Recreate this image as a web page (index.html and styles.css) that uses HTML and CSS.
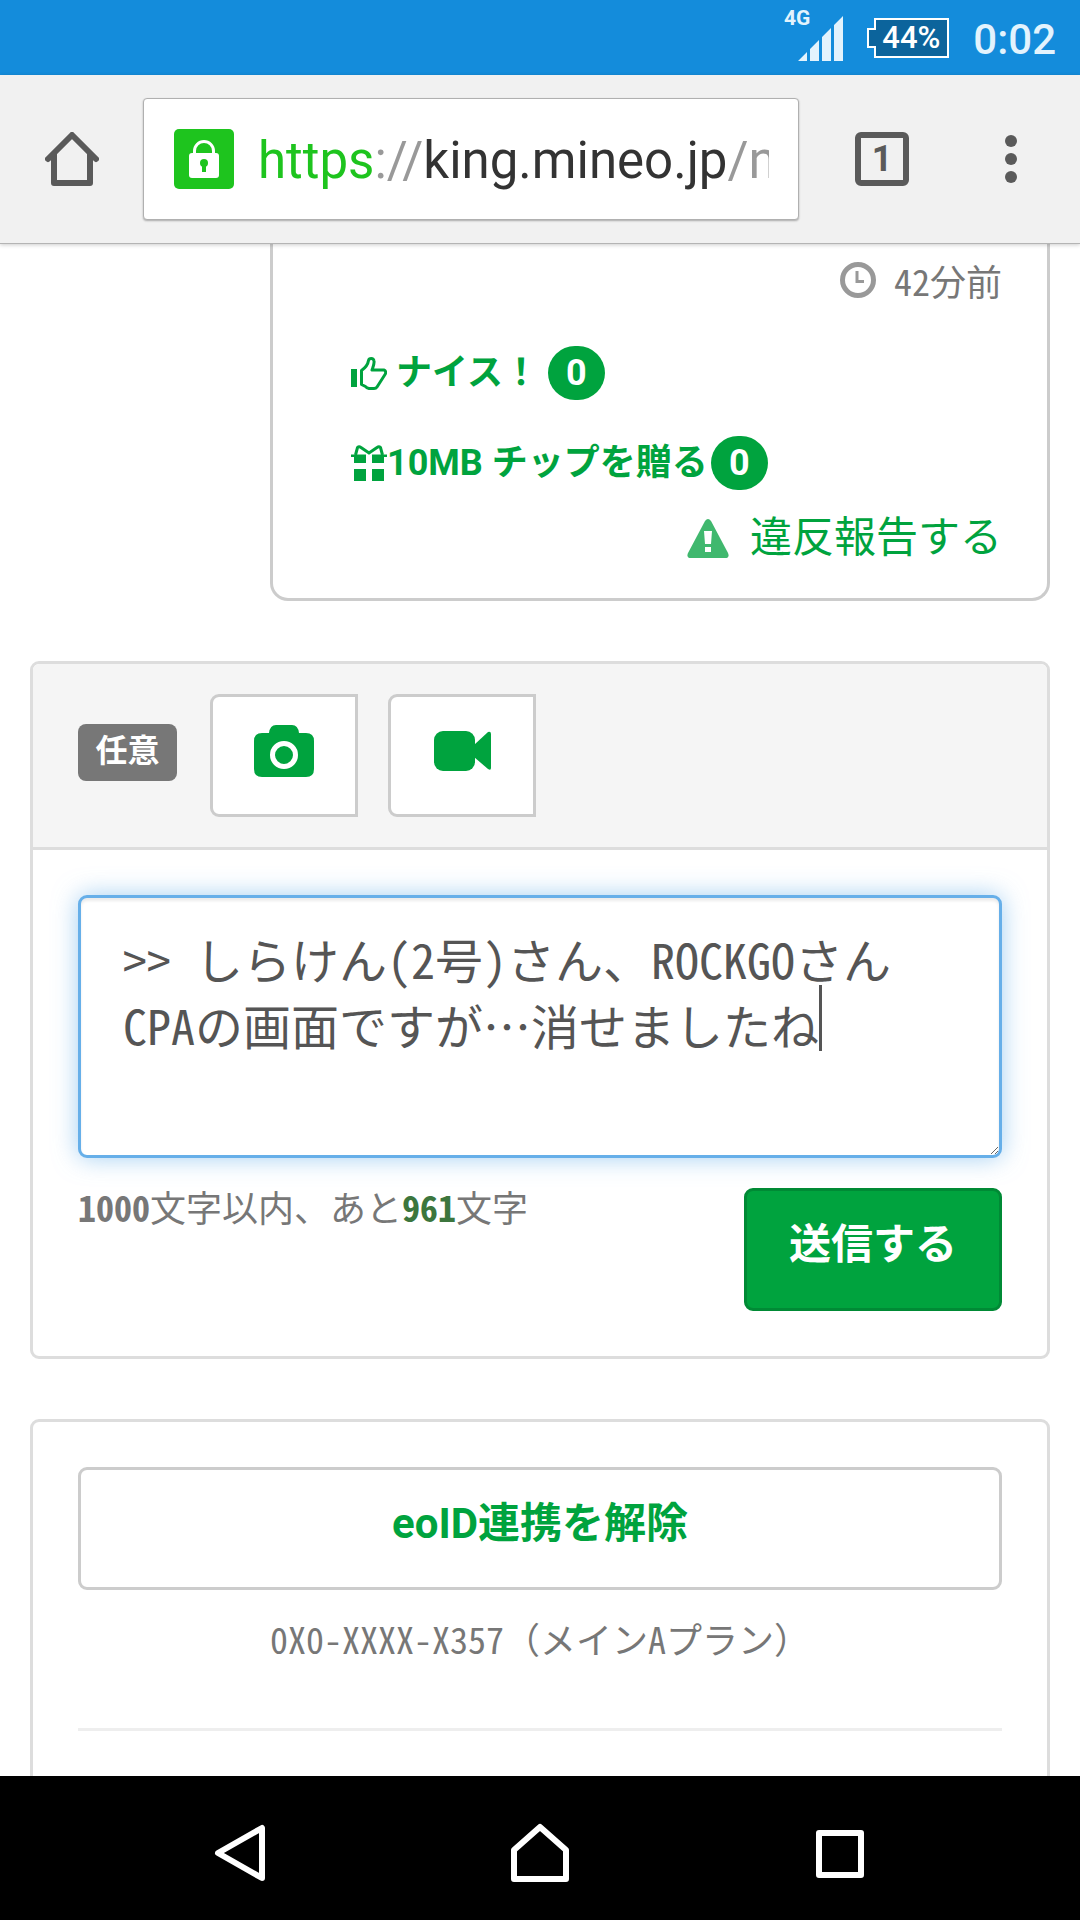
FILE: index.html
```html
<!DOCTYPE html>
<html lang="ja">
<head>
<meta charset="utf-8">
<meta name="viewport" content="width=device-width">
<title>king.mineo.jp</title>
<link rel="stylesheet" href="styles.css">
</head>
<body>
<div class="status-bar">
  <div class="signal">
    <span class="network">4G</span>
    <svg width="45" height="45" viewBox="0 0 45 45" fill="currentColor" aria-hidden="true"><path d="M0 45L9 36V45ZM12 33L21 24V45H12ZM24 21L33 12V45H24ZM36 9L45 0V45H36Z"/></svg>
  </div>
  <div class="battery">
    <svg class="battery-shape" width="82" height="40" viewBox="0 0 82 40" aria-hidden="true"><path d="M8 1H81V39H8V29H1V11H8Z" fill="#0c649c" stroke="#fff" stroke-width="2"/></svg>
    <span class="battery-level">44%</span>
  </div>
  <span class="clock">0:02</span>
</div>

<header class="toolbar">
  <button class="tool" type="button" aria-label="ホーム">
    <svg width="54" height="54" viewBox="0 0 54 54" fill="none" stroke="#5a5a5a" stroke-width="6" stroke-linecap="round" stroke-linejoin="round" aria-hidden="true"><path d="M3 27L27 3L51 27M9 22V51H45V22"/></svg>
  </button>
  <div class="address">
    <svg class="lock" width="60" height="60" viewBox="0 0 60 60" aria-hidden="true"><rect width="60" height="60" rx="5" fill="#1ec41e"/><path d="M20.500 26V22a9.500 9.500 0 0 1 19 0V26" fill="none" stroke="#fff" stroke-width="3"/><rect x="15" y="24" width="30" height="25" rx="3" fill="#fff"/><circle cx="30" cy="34" r="4" fill="#1ec41e"/><rect x="28" y="36" width="4" height="7" fill="#1ec41e"/></svg>
    <div class="url"><span class="scheme">https</span><span class="faint">://</span>king.mineo.jp<span class="faint">/n</span></div>
  </div>
  <button class="tool tabs" type="button" aria-label="タブ">1</button>
  <button class="tool" type="button" aria-label="メニュー">
    <svg width="12" height="48" viewBox="0 0 12 48" fill="#5a5a5a" aria-hidden="true"><circle cx="6" cy="6" r="6"/><circle cx="6" cy="24" r="6"/><circle cx="6" cy="42" r="6"/></svg>
  </button>
</header>

<main class="page">
  <article class="comment">
    <div class="time">
      <svg width="36" height="36" viewBox="0 0 36 36" fill="none" stroke="#999" aria-hidden="true"><circle cx="18" cy="18" r="15.500" stroke-width="5"/><path d="M17 9V19.500H24" stroke-width="3"/></svg>
      <span class="half">42分前</span>
    </div>
    <a class="action nice" href="#">
      <svg width="36" height="33" viewBox="0 0 36 33" aria-hidden="true"><path d="M0 12H6V30H0Z" fill="currentColor"/><path d="M10.500 13.500C14 11 17 7 17.500 3.500C18 1 22.500 .500 23 4C23.500 7 22 10 21 13H33C35 13.500 35 16 34 17.500L26 30Q25 31.500 23 31.500H18Q15.500 31 14.500 29.500L10.500 27.500Z" fill="none" stroke="currentColor" stroke-width="3" stroke-linejoin="round"/></svg>
      <span>ナイス！</span><span class="badge">0</span>
    </a>
    <a class="action tip" href="#">
      <svg width="36" height="36" viewBox="0 0 36 36" aria-hidden="true"><path d="M0 9.500H36V12H33V18H21V9.500H15V18H3V12H0ZM3 24H15V36H3ZM21 24H33V36H21Z" fill="currentColor"/><path d="M4.500 10L6.500 2.500Q8 1 10 2.500L18 8L26 2.500Q28 1 29.500 2.500L31.500 10" fill="none" stroke="currentColor" stroke-width="3"/></svg>
      <span>10MB チップを贈る</span><span class="badge">0</span>
    </a>
    <a class="report" href="#">
      <svg width="42" height="39" viewBox="0 0 42 39" aria-hidden="true"><path d="M18 2Q21 -2 24 2L41 34Q43 39 38 39H4Q-1 39 1 34Z" fill="#40b86e"/><path d="M17 12H25L24 25H18ZM18 28H24V33H18Z" fill="#fff"/></svg>
      <span>違反報告する</span>
    </a>
  </article>

  <form class="card" action="#" onsubmit="return false">
    <div class="attach">
      <span class="optional">任意</span>
      <button class="attach-button" type="button" aria-label="写真">
        <svg width="60" height="52" viewBox="0 0 60 52" aria-hidden="true"><path d="M15 8Q16 0 22 0H38Q44 0 45 8H52Q60 8 60 16V44Q60 52 52 52H8Q0 52 0 44V16Q0 8 8 8Z" fill="#00a33e"/><circle cx="30" cy="30" r="11.500" fill="none" stroke="#fff" stroke-width="5"/></svg>
      </button>
      <button class="attach-button" type="button" aria-label="動画">
        <svg width="57" height="40" viewBox="0 0 57 40" fill="#00a33e" aria-hidden="true"><rect width="41" height="40" rx="9"/><path d="M40 14L54 1Q57 0 57 3V37Q57 40 54 38L40 26Z"/></svg>
      </button>
    </div>
    <div class="compose">
      <div class="editor">
        <textarea class="message half" aria-label="コメント">&gt;&gt; しらけん(2号)さん、ROCKGOさん
CPAの画面ですが…消せましたね</textarea>
        <span class="caret"></span>
      </div>
      <div class="submit-row">
        <p class="counter half"><b>1000</b>文字以内、あと<b class="remaining">961</b>文字</p>
        <button class="submit" type="submit">送信する</button>
      </div>
    </div>
  </form>

  <section class="card account">
    <button class="unlink" type="button">eoID連携を解除</button>
    <p class="plan half">0X0-XXXX-X357<span class="full">（</span>メインAプラン<span class="full">）</span></p>
    <hr class="divider">
  </section>
</main>

<nav class="nav-bar">
  <button class="nav-button" type="button" aria-label="戻る"><svg width="60" height="60" viewBox="0 0 60 60" aria-hidden="true"><path d="M52 5V55L8 30Z"/></svg></button>
  <button class="nav-button" type="button" aria-label="ホーム画面"><svg width="60" height="60" viewBox="0 0 60 60" aria-hidden="true"><path d="M4 27L30 4L56 27V56H4Z"/></svg></button>
  <button class="nav-button" type="button" aria-label="履歴"><svg width="60" height="60" viewBox="0 0 60 60" aria-hidden="true"><path d="M9 10H51V52H9Z"/></svg></button>
</nav>
</body>
</html>
```
FILE: styles.css
```css
* {
  box-sizing: border-box;
}

body {
  display: flex;
  flex-direction: column;
  height: 100vh;
  margin: 0;
  overflow: hidden;
  background: #fff;
  color: #777;
  font-family: Roboto, "Noto Sans CJK JP", sans-serif;
  font-size: 36px;
}

button {
  padding: 0;
  border: 0;
  background: none;
  color: inherit;
  font: inherit;
}

a {
  color: #00a33e;
  text-decoration: none;
}

p {
  margin: 0;
}

svg {
  flex: none;
  display: block;
}

/* Half-width Latin letters and digits beside full-width kana */
.half {
  font-family: "Noto Sans CJK JP", sans-serif;
  font-feature-settings: "hwid";
}

.full {
  font-feature-settings: normal;
}

.status-bar {
  flex: none;
  display: flex;
  align-items: center;
  justify-content: flex-end;
  gap: 24px;
  height: 75px;
  padding-right: 24px;
  background: #148cdb;
  color: #e3f3fd;
}

.signal {
  display: flex;
  align-items: flex-start;
  padding-top: 2px;
}

.network {
  margin: -10px -12px 0 0;
  font-size: 21px;
  font-weight: 700;
  line-height: 24px;
}

.battery {
  display: grid;
  align-items: center;
  justify-items: center;
}

.battery > * {
  grid-area: 1 / 1;
}

.battery-level {
  padding-left: 6px;
  color: #fff;
  font-size: 31px;
  font-weight: 500;
  line-height: 40px;
}

.clock {
  padding-top: 4px;
  font-size: 42px;
  font-weight: 500;
}

.toolbar {
  flex: none;
  position: relative;
  display: flex;
  align-items: center;
  height: 169px;
  border-bottom: 1px solid #b4b4b4;
  background: #f1f1f1;
  box-shadow: 0 1px 4px rgba(0, 0, 0, 0.2);
}

.tool {
  flex: none;
  display: flex;
  justify-content: center;
  width: 54px;
  margin: 0 42px 0 45px;
}

.tabs {
  align-items: center;
  height: 54px;
  margin: 0 30px 0 56px;
  border: 6px solid #5a5a5a;
  border-radius: 6px;
  color: #5a5a5a;
  font-size: 36px;
  font-weight: 700;
  line-height: 42px;
}

.address {
  flex: 1;
  min-width: 0;
  display: flex;
  align-items: center;
  gap: 24px;
  height: 122px;
  margin-left: 2px;
  padding: 0 29px 0 30px;
  border: 1px solid #b0b0b0;
  border-radius: 4px;
  background: #fff;
  box-shadow: 0 1px 2px rgba(0, 0, 0, 0.3);
}

.url {
  flex: 1;
  overflow: hidden;
  padding-top: 4px;
  color: #333;
  font-size: 51px;
  line-height: 66px;
  white-space: nowrap;
}

.scheme {
  color: #1ec41e;
}

.faint {
  color: #999;
}

.page {
  flex: 1;
  min-height: 0;
  overflow: hidden;
  padding: 0 30px;
}

.comment {
  display: flex;
  flex-direction: column;
  align-items: flex-start;
  gap: 36px;
  margin-left: 240px;
  padding: 9px 45px 30px 78px;
  border: 3px solid #ccc;
  border-top: 0;
  border-radius: 0 0 18px 18px;
}

.time {
  align-self: flex-end;
  display: flex;
  align-items: center;
  gap: 18px;
  margin-bottom: 3px;
  line-height: 54px;
}

.action {
  display: flex;
  align-items: center;
  font-weight: 700;
  line-height: 54px;
}

.nice {
  gap: 9px;
}

.badge {
  width: 57px;
  height: 54px;
  border-radius: 27px;
  background: #00a33e;
  color: #fff;
  text-align: center;
}

.tip .badge {
  margin-left: 3px;
}

.report {
  align-self: flex-end;
  display: flex;
  align-items: center;
  gap: 21px;
  margin-top: -18px;
  font-size: 42px;
  line-height: 60px;
}

.card {
  margin-top: 60px;
  border: 3px solid #ddd;
  border-radius: 9px;
}

.attach {
  display: flex;
  align-items: center;
  gap: 30px;
  padding: 30px 45px;
  border-bottom: 3px solid #ddd;
  border-radius: 6px 6px 0 0;
  background: #f5f5f5;
}

.optional {
  width: 99px;
  height: 57px;
  margin: 0 3px 6px 0;
  border-radius: 8px;
  background: #777;
  color: #fff;
  font-size: 32px;
  font-weight: 700;
  line-height: 54px;
  text-align: center;
}

.attach-button {
  display: flex;
  align-items: center;
  justify-content: center;
  width: 148px;
  height: 123px;
  padding-bottom: 9px;
  border: 3px solid #ccc;
  border-radius: 9px 0 0 9px;
  background: #fff;
}

.compose {
  padding: 45px;
}

.editor {
  position: relative;
}

.message {
  display: block;
  width: 100%;
  height: 263px;
  padding: 27px 42px;
  border: 3px solid #66afe9;
  border-radius: 9px;
  outline: 0;
  background: #fff;
  box-shadow: inset 0 3px 3px rgba(0, 0, 0, 0.08), 0 0 24px rgba(102, 175, 233, 0.6);
  color: #555;
  font-size: 48px;
  line-height: 66px;
  resize: vertical;
}

.caret {
  position: absolute;
  top: 90px;
  left: 741px;
  width: 3px;
  height: 66px;
  background: #555;
}

.submit-row {
  display: flex;
  align-items: flex-start;
  justify-content: space-between;
  margin-top: 30px;
}

.counter {
  line-height: 36px;
}

.remaining {
  color: #3c763d;
}

.submit {
  width: 258px;
  height: 123px;
  padding-bottom: 18px;
  border: 3px solid #008a35;
  border-radius: 9px;
  background: #00a33e;
  color: #fff;
  font-size: 42px;
  font-weight: 700;
}

.account {
  padding: 45px 45px 60px;
}

.unlink {
  display: block;
  width: 100%;
  height: 123px;
  padding-bottom: 18px;
  border: 3px solid #ccc;
  border-radius: 9px;
  color: #00a33e;
  font-size: 42px;
  font-weight: 700;
}

.plan {
  margin-top: 21px;
  line-height: 54px;
  text-align: center;
}

.divider {
  height: 3px;
  margin: 63px 0;
  border: 0;
  background: #eee;
}

.nav-bar {
  flex: none;
  display: flex;
  justify-content: center;
  gap: 240px;
  height: 144px;
  padding-top: 9px;
  background: #000;
}

.nav-button {
  display: flex;
  align-items: center;
}

.nav-button svg {
  fill: none;
  stroke: #fff;
  stroke-width: 6;
  stroke-linejoin: round;
}
```
